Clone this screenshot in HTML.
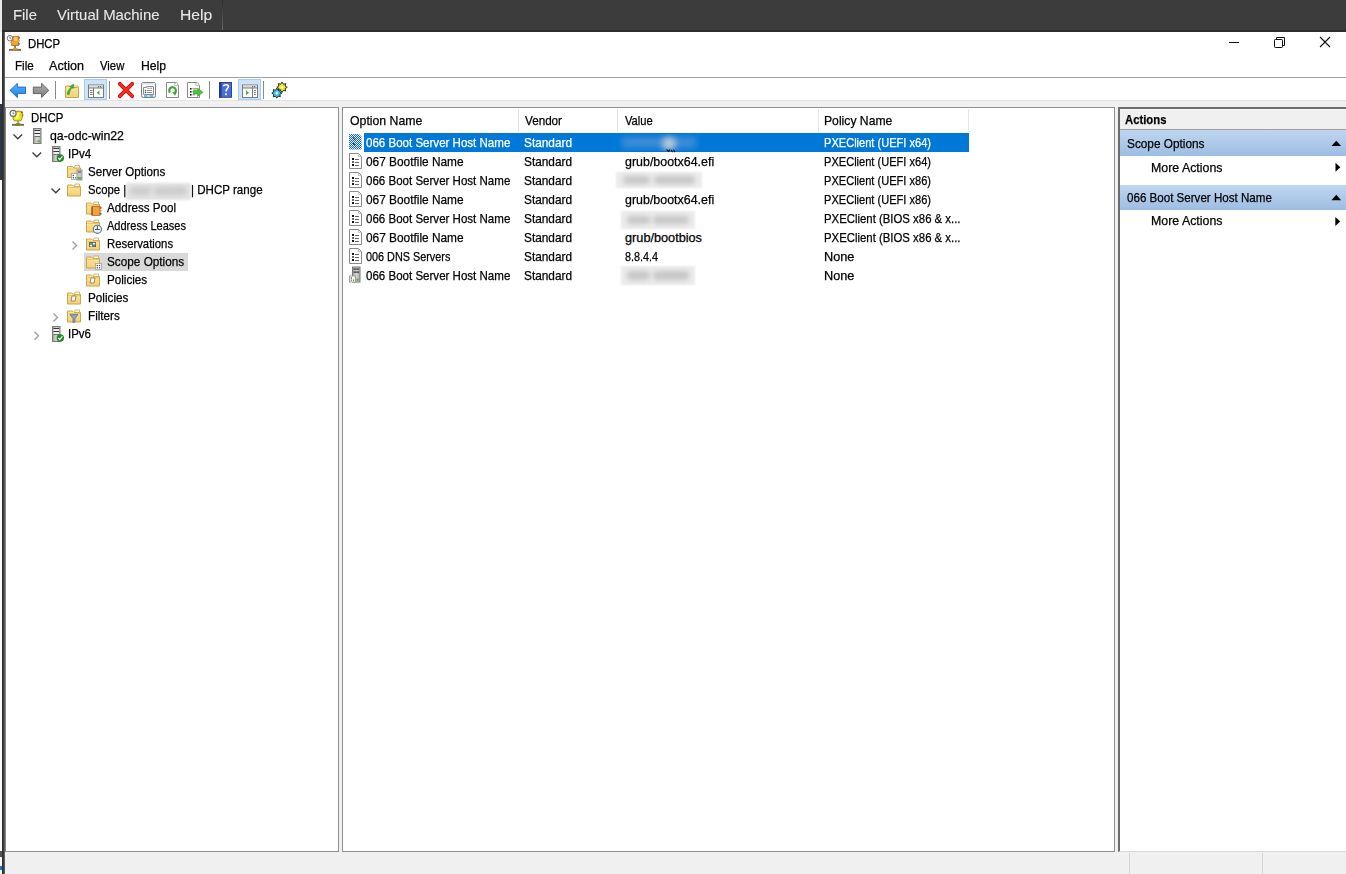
<!DOCTYPE html>
<html><head><meta charset="utf-8"><style>
*{margin:0;padding:0;box-sizing:border-box}
html,body{width:1346px;height:874px;overflow:hidden;background:#fff;font-family:"Liberation Sans",sans-serif;color:#000}
.t{position:absolute;white-space:nowrap;transform-origin:0 0;-webkit-text-stroke:0.25px currentColor}
.b{position:absolute}
svg{position:absolute;left:0;top:0}
</style></head><body>
<div class="b" style="left:0px;top:0px;width:1346px;height:32px;background:#3c3c3c"></div>
<div class="b" style="left:0px;top:32px;width:2px;height:842px;background:#fafafa"></div>
<div class="b" style="left:0px;top:104px;width:2px;height:76px;background:#2e3844"></div>
<div class="b" style="left:0px;top:866px;width:2px;height:4px;background:#1a78d0"></div>
<div class="b" style="left:0px;top:851px;width:2px;height:6px;background:#555"></div>
<div class="b" style="left:0px;top:0px;width:2px;height:32px;background:#e9e9e9"></div>
<div class="b" style="left:2px;top:32px;width:3px;height:842px;background:linear-gradient(90deg,#2e2e2e 0,#2e2e2e 33%,#3e3e3e 33%,#3e3e3e 66%,#5e5e5e 66%)"></div>
<div class="b" style="left:2px;top:30px;width:1344px;height:2px;background:#2c2c2c"></div>
<div class="b" style="left:222px;top:0px;width:1px;height:30px;background:linear-gradient(#2a2a2a,#6a6a6a)"></div>
<div class="b" style="left:5px;top:77px;width:1341px;height:1px;background:#a0a0a0"></div>
<div class="b" style="left:5px;top:100px;width:1341px;height:1px;background:#e3e3e3"></div>
<div class="b" style="left:5px;top:101px;width:1341px;height:773px;background:#f0f0f0"></div>
<div class="b" style="left:5px;top:107px;width:334px;height:745px;background:#fff;border:1px solid #909090;border-left-color:#858585"></div>
<div class="b" style="left:342px;top:107px;width:773px;height:745px;background:#fff;border:1px solid #909090"></div>
<div class="b" style="left:1118px;top:107px;width:228px;height:745px;background:#fff;border-left:2px solid #6d6d6d;border-top:2px solid #6d6d6d;border-bottom:1px solid #d8d8d8"></div>
<div class="b" style="left:1129px;top:853px;width:1px;height:21px;background:#d6d6d6"></div>
<div class="b" style="left:1262px;top:853px;width:1px;height:21px;background:#d6d6d6"></div>
<div class="b" style="left:84px;top:79px;width:23px;height:21px;background:#cce4f7;border:1px solid #a6cdef"></div>
<div class="b" style="left:238px;top:79px;width:23px;height:21px;background:#cce4f7;border:1px solid #a6cdef"></div>
<div class="b" style="left:55px;top:81px;width:1px;height:18px;background:#8a8a8a"></div>
<div class="b" style="left:109px;top:81px;width:1px;height:18px;background:#8a8a8a"></div>
<div class="b" style="left:209px;top:81px;width:1px;height:18px;background:#8a8a8a"></div>
<div class="b" style="left:263px;top:81px;width:1px;height:18px;background:#8a8a8a"></div>
<div class="b" style="left:518px;top:109px;width:1px;height:23px;background:#e5e5e5"></div>
<div class="b" style="left:617px;top:109px;width:1px;height:23px;background:#e5e5e5"></div>
<div class="b" style="left:818px;top:109px;width:1px;height:23px;background:#e5e5e5"></div>
<div class="b" style="left:968px;top:109px;width:1px;height:23px;background:#e5e5e5"></div>
<div class="b" style="left:364px;top:133px;width:605px;height:19px;background:#0078d7"></div>
<div class="b" style="left:84px;top:253px;width:104px;height:18px;background:#d9d9d9"></div>
<div class="b" style="left:1120px;top:109px;width:226px;height:20px;background:#f0f0f0;border-top:1px solid #fafafa"></div>
<div class="b" style="left:1120px;top:129px;width:226px;height:1px;background:#a0a0a0"></div>
<div class="b" style="left:1120px;top:130px;width:226px;height:26px;background:linear-gradient(#bfd6f0,#9dbde3)"></div>
<div class="b" style="left:1120px;top:185px;width:226px;height:25px;background:linear-gradient(#bfd6f0,#9dbde3)"></div>
<div class="b" style="left:125px;top:182px;width:67px;height:18px;"><div class="b" style="left:1px;top:0.5px;width:65px;height:17px;background:#e4e4e4;filter:blur(0.8px)"></div><div class="b" style="left:5px;top:5.4px;width:21px;height:8.1px;background:#cbcbcb;filter:blur(2.5px);border-radius:4px"></div><div class="b" style="left:29px;top:5.4px;width:33px;height:8.1px;background:#cbcbcb;filter:blur(2.5px);border-radius:4px"></div></div>
<div class="b" style="left:615px;top:171px;width:88px;height:17px;"><div class="b" style="left:1px;top:0.5px;width:86px;height:16px;background:#ececec;filter:blur(0.8px)"></div><div class="b" style="left:8px;top:5.1px;width:27px;height:7.7px;background:#c6c6c6;filter:blur(2.5px);border-radius:4px"></div><div class="b" style="left:39px;top:5.1px;width:41px;height:7.7px;background:#c6c6c6;filter:blur(2.5px);border-radius:4px"></div></div>
<div class="b" style="left:620px;top:210px;width:76px;height:19px;"><div class="b" style="left:1px;top:0.5px;width:74px;height:18px;background:#ececec;filter:blur(0.8px)"></div><div class="b" style="left:7px;top:5.7px;width:23px;height:8.6px;background:#c6c6c6;filter:blur(2.5px);border-radius:4px"></div><div class="b" style="left:33px;top:5.7px;width:36px;height:8.6px;background:#c6c6c6;filter:blur(2.5px);border-radius:4px"></div></div>
<div class="b" style="left:620px;top:265px;width:76px;height:20px;"><div class="b" style="left:1px;top:0.5px;width:74px;height:19px;background:#ececec;filter:blur(0.8px)"></div><div class="b" style="left:7px;top:6.0px;width:23px;height:9.0px;background:#c6c6c6;filter:blur(2.5px);border-radius:4px"></div><div class="b" style="left:33px;top:6.0px;width:36px;height:9.0px;background:#c6c6c6;filter:blur(2.5px);border-radius:4px"></div></div>
<div class="b" style="left:618px;top:134px;width:82px;height:17px;overflow:hidden"><div class="b" style="left:4px;top:3px;width:74px;height:11px;background:#3e8cd6;filter:blur(3px)"></div><div class="b" style="left:44px;top:3px;width:14px;height:13px;background:#b8c8d8;filter:blur(3px);border-radius:6px"></div></div>
<svg width="1346" height="874" viewBox="0 0 1346 874"><defs>
<pattern id="chk" width="2" height="2" patternUnits="userSpaceOnUse"><rect width="2" height="2" fill="#e8f0fa"/><rect width="1" height="1" fill="#1064c8"/><rect x="1" y="1" width="1" height="1" fill="#1064c8"/></pattern>
<linearGradient id="tow" x1="0" y1="0" x2="1" y2="0"><stop offset="0" stop-color="#9a9a9a"/><stop offset="0.5" stop-color="#d8d8d8"/><stop offset="1" stop-color="#a8a8a8"/></linearGradient>
<linearGradient id="fold" x1="0" y1="0" x2="0" y2="1"><stop offset="0" stop-color="#fbe7a6"/><stop offset="1" stop-color="#f3cf72"/></linearGradient>
<linearGradient id="blu" x1="0" y1="0" x2="0" y2="1"><stop offset="0" stop-color="#5ab8ff"/><stop offset="1" stop-color="#1a7ee0"/></linearGradient>
<linearGradient id="gry" x1="0" y1="0" x2="0" y2="1"><stop offset="0" stop-color="#b0b0b0"/><stop offset="1" stop-color="#7a7a7a"/></linearGradient>
</defs>
<path d="M12.8 36.3 H18.5 V45.5 H11.6 V43.5 L10.8 42.6 L11.8 41.3 L12.8 40 Z" fill="#f4a62e" stroke="#9a7010" stroke-width="0.8"/>
<path d="M14.2 37.2 H17.2 V41 L14.2 41 Z" fill="#ffd060" opacity="0.9"/>
<circle cx="9.9" cy="38.2" r="2.7" fill="#fff" stroke="#6a6a7a" stroke-width="0.9"/><path d="M9.9 36.6 V38.3 H11.4" stroke="#5a5a8a" stroke-width="0.7" fill="none"/>
<circle cx="18.9" cy="37.8" r="1.1" fill="#e04a3a"/><circle cx="19" cy="40.8" r="1.1" fill="#e8c020"/><circle cx="18.8" cy="44" r="1.1" fill="#1a88c0"/>
<rect x="14.3" y="45.8" width="1.6" height="2.4" fill="#8a6a30"/><rect x="9" y="48.9" width="12" height="1.9" fill="#6a6a6a"/><rect x="13" y="48.2" width="4.2" height="2.6" fill="#d88a18"/>
<path d="M15.5 111.3 H20.5 L22.6 113.3 L22.3 117.5 L20.8 120.8 H14.3 L13 118.5 L13.6 115.5 Z" fill="#e8e020" stroke="#8a8a00" stroke-width="0.9"/>
<path d="M17 112.5 L19.5 112.5 L18.5 119 L15 119 Z" fill="#ffff70" opacity="0.9"/>
<circle cx="21.9" cy="112.3" r="1" fill="#d02a2a"/><circle cx="22.6" cy="115.3" r="0.9" fill="#7a8a00"/>
<circle cx="13.1" cy="113.4" r="3" fill="#fff" stroke="#6a6a6a" stroke-width="1.1"/><path d="M13.1 111.8 V113.6 H14.6" stroke="#6a6a6a" stroke-width="0.8" fill="none"/>
<rect x="17.2" y="121" width="1.6" height="2.5" fill="#8a8a8a"/><rect x="12" y="123.9" width="12" height="1.9" fill="#6e6e6e"/><rect x="15.8" y="123.2" width="4.5" height="2.6" fill="#7a8a00"/>
<g transform="translate(33,128)"><rect x="0.5" y="0.5" width="7.5" height="15" fill="url(#tow)" stroke="#7a7a7a" stroke-width="1"/>
<rect x="1.5" y="2" width="5.5" height="1.2" fill="#333"/><rect x="1.5" y="3.2" width="5.5" height="1.5" fill="#fff"/>
<rect x="1.5" y="5" width="5.5" height="1.2" fill="#333"/><rect x="1.5" y="6.2" width="5.5" height="1.5" fill="#fff"/>
<rect x="1.5" y="8" width="5.5" height="0.8" fill="#555"/><circle cx="5.8" cy="13.3" r="1.3" fill="#50c020"/></g>
<g transform="translate(52,146)"><rect x="0.5" y="0.5" width="7.5" height="15" fill="url(#tow)" stroke="#7a7a7a" stroke-width="1"/>
<rect x="1.5" y="2" width="5.5" height="1.2" fill="#333"/><rect x="1.5" y="3.2" width="5.5" height="1.5" fill="#fff"/>
<rect x="1.5" y="5" width="5.5" height="1.2" fill="#333"/><rect x="1.5" y="6.2" width="5.5" height="1.5" fill="#fff"/>
<rect x="1.5" y="8" width="5.5" height="0.8" fill="#555"/></g>
<circle cx="60.3" cy="158" r="3.7" fill="#1f8a1f"/><path d="M58.3 158 L59.8 159.6 L62.4 156.3" stroke="#fff" stroke-width="1.3" fill="none"/>
<g transform="translate(52,326)"><rect x="0.5" y="0.5" width="7.5" height="15" fill="url(#tow)" stroke="#7a7a7a" stroke-width="1"/>
<rect x="1.5" y="2" width="5.5" height="1.2" fill="#333"/><rect x="1.5" y="3.2" width="5.5" height="1.5" fill="#fff"/>
<rect x="1.5" y="5" width="5.5" height="1.2" fill="#333"/><rect x="1.5" y="6.2" width="5.5" height="1.5" fill="#fff"/>
<rect x="1.5" y="8" width="5.5" height="0.8" fill="#555"/></g>
<circle cx="60.3" cy="338" r="3.7" fill="#1f8a1f"/><path d="M58.3 338 L59.8 339.6 L62.4 336.3" stroke="#fff" stroke-width="1.3" fill="none"/>
<path d="M13.5 134.5 L17.8 138.8 L22.1 134.5" stroke="#404040" stroke-width="1.4" fill="none"/>
<path d="M32.5 152.5 L36.8 156.8 L41.1 152.5" stroke="#404040" stroke-width="1.4" fill="none"/>
<path d="M51.5 188.5 L55.8 192.8 L60.1 188.5" stroke="#404040" stroke-width="1.4" fill="none"/>
<path d="M72.5 241.5 L76.5 245.5 L72.5 249.5" stroke="#a0a0a0" stroke-width="1.4" fill="none"/>
<path d="M53.5 313.5 L57.5 317.5 L53.5 321.5" stroke="#a0a0a0" stroke-width="1.4" fill="none"/>
<path d="M34.5 331.7 L38.5 335.7 L34.5 339.7" stroke="#a0a0a0" stroke-width="1.4" fill="none"/>
<g transform="translate(67,165)"><path d="M0.5 1.5 H5.5 L7 3 H13.5 V12.5 H0.5 Z" fill="url(#fold)" stroke="#c9a551" stroke-width="1"/>
<path d="M8 0.5 H12.5 V3 H7.5 Z" fill="#fff" stroke="#c9a551" stroke-width="0.8"/>
<path d="M1 4 H13" stroke="#f0c860" stroke-width="1"/></g>
<rect x="71.5" y="173.5" width="6" height="6" fill="#fff" stroke="#a0a0a0" stroke-width="0.8"/><circle cx="73.3" cy="175.5" r="0.7" fill="#444"/><circle cx="73.3" cy="177.7" r="0.7" fill="#444"/><circle cx="75.6" cy="177.7" r="0.7" fill="#444"/>
<rect x="77" y="170" width="5" height="10" fill="#c8c8c8" stroke="#8a8a8a" stroke-width="0.8"/><rect x="77.5" y="177" width="4" height="2.5" fill="#6ab04a"/><rect x="78" y="171.5" width="3" height="1" fill="#444"/>
<g transform="translate(67,183.5)"><path d="M0.5 1.5 H5.5 L7 3 H13.5 V12.5 H0.5 Z" fill="url(#fold)" stroke="#c9a551" stroke-width="1"/>
<path d="M8 0.5 H12.5 V3 H7.5 Z" fill="#fff" stroke="#c9a551" stroke-width="0.8"/>
<path d="M1 4 H13" stroke="#f0c860" stroke-width="1"/></g>
<g transform="translate(86,201.5)"><path d="M0.5 1.5 H5.5 L7 3 H13.5 V12.5 H0.5 Z" fill="url(#fold)" stroke="#c9a551" stroke-width="1"/>
<path d="M8 0.5 H12.5 V3 H7.5 Z" fill="#fff" stroke="#c9a551" stroke-width="0.8"/>
<path d="M1 4 H13" stroke="#f0c860" stroke-width="1"/></g>
<rect x="92" y="206.5" width="8" height="9" fill="#f5a040" stroke="#b06a18" stroke-width="0.8"/><path d="M91 208 H93 M91 210 H93 M91 212 H93 M91 214 H93" stroke="#6a4010" stroke-width="0.9"/><circle cx="100.6" cy="207.8" r="1.1" fill="#d84a2a"/><circle cx="100.6" cy="210.8" r="1.1" fill="#e8a020"/><circle cx="100.6" cy="213.8" r="1.1" fill="#1a80b0"/>
<g transform="translate(86,219.5)"><path d="M0.5 1.5 H5.5 L7 3 H13.5 V12.5 H0.5 Z" fill="url(#fold)" stroke="#c9a551" stroke-width="1"/>
<path d="M8 0.5 H12.5 V3 H7.5 Z" fill="#fff" stroke="#c9a551" stroke-width="0.8"/>
<path d="M1 4 H13" stroke="#f0c860" stroke-width="1"/></g>
<circle cx="97.4" cy="229.3" r="4.1" fill="#e6f2fc" stroke="#6a747e" stroke-width="1.1"/><path d="M97.4 226 V229.5 M95 229.5 H99.8" stroke="#3a4048" stroke-width="0.9" fill="none"/>
<g transform="translate(86,237.5)"><path d="M0.5 1.5 H5.5 L7 3 H13.5 V12.5 H0.5 Z" fill="url(#fold)" stroke="#c9a551" stroke-width="1"/>
<path d="M8 0.5 H12.5 V3 H7.5 Z" fill="#fff" stroke="#c9a551" stroke-width="0.8"/>
<path d="M1 4 H13" stroke="#f0c860" stroke-width="1"/></g>
<g transform="translate(0,1)"><rect x="89" y="241" width="7" height="5" fill="#555"/><rect x="89.8" y="241.8" width="2.4" height="1.7" fill="#50c050"/><rect x="92.8" y="241.8" width="2.4" height="1.7" fill="#fff"/><rect x="89.8" y="243.8" width="2.4" height="1.7" fill="#fff"/><rect x="92.8" y="243.8" width="2.4" height="1.7" fill="#5090e0"/></g>
<g transform="translate(86,255.5)"><path d="M0.5 1.5 H5.5 L7 3 H13.5 V12.5 H0.5 Z" fill="url(#fold)" stroke="#c9a551" stroke-width="1"/>
<path d="M8 0.5 H12.5 V3 H7.5 Z" fill="#fff" stroke="#c9a551" stroke-width="0.8"/>
<path d="M1 4 H13" stroke="#f0c860" stroke-width="1"/></g>
<g transform="translate(0,1)"><rect x="95.5" y="262.5" width="6" height="6" fill="#fff" stroke="#a0a0a0" stroke-width="0.8"/><circle cx="97.3" cy="264.5" r="0.7" fill="#444"/><circle cx="97.3" cy="266.7" r="0.7" fill="#444"/><circle cx="99.6" cy="264.5" r="0.7" fill="#444"/><circle cx="99.6" cy="266.7" r="0.7" fill="#444"/></g>
<g transform="translate(86,273.5)"><path d="M0.5 1.5 H5.5 L7 3 H13.5 V12.5 H0.5 Z" fill="url(#fold)" stroke="#c9a551" stroke-width="1"/>
<path d="M8 0.5 H12.5 V3 H7.5 Z" fill="#fff" stroke="#c9a551" stroke-width="0.8"/>
<path d="M1 4 H13" stroke="#f0c860" stroke-width="1"/></g>
<g transform="translate(0,1)"><path d="M90 282 L91 277 L95 277 L94 282 Z" fill="#fff" stroke="#8a7040" stroke-width="0.8"/></g>
<g transform="translate(67,291.5)"><path d="M0.5 1.5 H5.5 L7 3 H13.5 V12.5 H0.5 Z" fill="url(#fold)" stroke="#c9a551" stroke-width="1"/>
<path d="M8 0.5 H12.5 V3 H7.5 Z" fill="#fff" stroke="#c9a551" stroke-width="0.8"/>
<path d="M1 4 H13" stroke="#f0c860" stroke-width="1"/></g>
<g transform="translate(0,1)"><path d="M71 300 L72 295 L76 295 L75 300 Z" fill="#fff" stroke="#8a7040" stroke-width="0.8"/></g>
<g transform="translate(67,309.5)"><path d="M0.5 1.5 H5.5 L7 3 H13.5 V12.5 H0.5 Z" fill="url(#fold)" stroke="#c9a551" stroke-width="1"/>
<path d="M8 0.5 H12.5 V3 H7.5 Z" fill="#fff" stroke="#c9a551" stroke-width="0.8"/>
<path d="M1 4 H13" stroke="#f0c860" stroke-width="1"/></g>
<g transform="translate(0,1)"><path d="M70 313.5 H78 L75 317.5 V321 L73 321.5 V317.5 Z" fill="#8aa6c6" stroke="#5a6a7a" stroke-width="0.7"/></g>
<g transform="translate(349,134)"><path d="M0 0 H10 L12.5 2.5 V15.5 H0 Z" fill="url(#chk)"/>
<path d="M4 3.5 L6 6 M4 9 L6 11.5" stroke="#0a3a80" stroke-width="1.2"/></g>
<g transform="translate(349,153)"><path d="M0.5 0.5 H9.5 L12.5 3.5 V15.5 H0.5 Z" fill="#fff" stroke="#8a8a8a" stroke-width="1"/>
<path d="M9.5 0.5 V3.5 H12.5" fill="none" stroke="#b8b8b8" stroke-width="0.8"/>
<rect x="3" y="5" width="2" height="2" fill="#111"/><rect x="3" y="8" width="2" height="2" fill="#666"/><rect x="3" y="11" width="2" height="2" fill="#111"/>
<path d="M6 6.5 H10 M6 9.5 H10 M6 12.5 H10" stroke="#666" stroke-width="1"/></g>
<g transform="translate(349,172)"><path d="M0.5 0.5 H9.5 L12.5 3.5 V15.5 H0.5 Z" fill="#fff" stroke="#8a8a8a" stroke-width="1"/>
<path d="M9.5 0.5 V3.5 H12.5" fill="none" stroke="#b8b8b8" stroke-width="0.8"/>
<rect x="3" y="5" width="2" height="2" fill="#111"/><rect x="3" y="8" width="2" height="2" fill="#666"/><rect x="3" y="11" width="2" height="2" fill="#111"/>
<path d="M6 6.5 H10 M6 9.5 H10 M6 12.5 H10" stroke="#666" stroke-width="1"/></g>
<g transform="translate(349,191)"><path d="M0.5 0.5 H9.5 L12.5 3.5 V15.5 H0.5 Z" fill="#fff" stroke="#8a8a8a" stroke-width="1"/>
<path d="M9.5 0.5 V3.5 H12.5" fill="none" stroke="#b8b8b8" stroke-width="0.8"/>
<rect x="3" y="5" width="2" height="2" fill="#111"/><rect x="3" y="8" width="2" height="2" fill="#666"/><rect x="3" y="11" width="2" height="2" fill="#111"/>
<path d="M6 6.5 H10 M6 9.5 H10 M6 12.5 H10" stroke="#666" stroke-width="1"/></g>
<g transform="translate(349,210)"><path d="M0.5 0.5 H9.5 L12.5 3.5 V15.5 H0.5 Z" fill="#fff" stroke="#8a8a8a" stroke-width="1"/>
<path d="M9.5 0.5 V3.5 H12.5" fill="none" stroke="#b8b8b8" stroke-width="0.8"/>
<rect x="3" y="5" width="2" height="2" fill="#111"/><rect x="3" y="8" width="2" height="2" fill="#666"/><rect x="3" y="11" width="2" height="2" fill="#111"/>
<path d="M6 6.5 H10 M6 9.5 H10 M6 12.5 H10" stroke="#666" stroke-width="1"/></g>
<g transform="translate(349,229)"><path d="M0.5 0.5 H9.5 L12.5 3.5 V15.5 H0.5 Z" fill="#fff" stroke="#8a8a8a" stroke-width="1"/>
<path d="M9.5 0.5 V3.5 H12.5" fill="none" stroke="#b8b8b8" stroke-width="0.8"/>
<rect x="3" y="5" width="2" height="2" fill="#111"/><rect x="3" y="8" width="2" height="2" fill="#666"/><rect x="3" y="11" width="2" height="2" fill="#111"/>
<path d="M6 6.5 H10 M6 9.5 H10 M6 12.5 H10" stroke="#666" stroke-width="1"/></g>
<g transform="translate(349,248)"><path d="M0.5 0.5 H9.5 L12.5 3.5 V15.5 H0.5 Z" fill="#fff" stroke="#8a8a8a" stroke-width="1"/>
<path d="M9.5 0.5 V3.5 H12.5" fill="none" stroke="#b8b8b8" stroke-width="0.8"/>
<rect x="3" y="5" width="2" height="2" fill="#111"/><rect x="3" y="8" width="2" height="2" fill="#666"/><rect x="3" y="11" width="2" height="2" fill="#111"/>
<path d="M6 6.5 H10 M6 9.5 H10 M6 12.5 H10" stroke="#666" stroke-width="1"/></g>
<g transform="translate(349,266.5)"><rect x="3.5" y="0.5" width="7.5" height="15" fill="url(#tow)" stroke="#7a7a7a" stroke-width="1"/>
<rect x="4.5" y="2" width="5.5" height="1.2" fill="#333"/><rect x="4.5" y="5" width="5.5" height="1.2" fill="#333"/>
<rect x="0.5" y="9.5" width="6" height="6" fill="#fff" stroke="#8a8a8a" stroke-width="0.8"/><circle cx="2.3" cy="11.5" r="0.7" fill="#333"/><circle cx="2.3" cy="13.6" r="0.7" fill="#333"/><circle cx="4.5" cy="13.6" r="0.7" fill="#333"/><circle cx="8.5" cy="13.3" r="1.2" fill="#60b040"/></g>
<path d="M10 90.4 L17.4 83.3 V87.1 H25.5 V93.6 H17.4 V97.5 Z" fill="url(#blu)" stroke="#1a68c0" stroke-width="0.9"/>
<path d="M48.8 90.4 L41.6 83.3 V87.1 H33.3 V93.6 H41.6 V97.5 Z" fill="url(#gry)" stroke="#5a5a5a" stroke-width="0.9"/>
<g transform="translate(65,83)"><path d="M0.5 3 H5 L6.5 4.5 H13.5 V14.5 H0.5 Z" fill="url(#fold)" stroke="#c9a551" stroke-width="1"/>
<path d="M8.5 3 H13 L13.5 4.5" fill="#fff" stroke="#c9a551" stroke-width="0.8"/>
<path d="M2.2 11.2 C2.6 8.2 4.2 6.2 5.8 4.6 L4.6 3.4 L8.8 1.2 L8.2 5.6 L7.1 4.6 C5.8 6 4.6 8.2 4.2 11.4 Z" fill="#42bc3a" stroke="#1e8a1e" stroke-width="0.6"/></g>
<g transform="translate(88,84.5)"><rect x="0.5" y="0.5" width="15" height="12.5" fill="#fff" stroke="#7a7a7a" stroke-width="1"/>
<rect x="1" y="1" width="14" height="2.5" fill="#dcdcdc"/><path d="M1 3.5 H15" stroke="#7a7a7a"/>
<rect x="12" y="1.6" width="1.2" height="1.2" fill="#666"/><rect x="10" y="1.6" width="1.2" height="1.2" fill="#666"/><path d="M5.5 3.5 V13" stroke="#7a7a7a"/><path d="M2 6 H4.5 M2 8 H4.5 M2 10 H4.5" stroke="#7a7a7a" stroke-width="1"/><path d="M11.5 6 L8.5 8.3 L11.5 10.6 Z" fill="#50b030"/></g>
<g transform="translate(242,84.5)"><rect x="0.5" y="0.5" width="15" height="12.5" fill="#fff" stroke="#7a7a7a" stroke-width="1"/>
<rect x="1" y="1" width="14" height="2.5" fill="#dcdcdc"/><path d="M1 3.5 H15" stroke="#7a7a7a"/>
<rect x="12" y="1.6" width="1.2" height="1.2" fill="#666"/><rect x="10" y="1.6" width="1.2" height="1.2" fill="#666"/><path d="M10.5 3.5 V13" stroke="#7a7a7a"/><path d="M12 6 H14 M12 8 H14 M12 10 H14" stroke="#7a7a7a" stroke-width="1"/><path d="M4 5.8 L7 8.3 L4 10.8 Z" fill="#50b030"/></g>
<path d="M119.8 83.8 L132.2 96.2 M132.2 83.8 L119.8 96.2" stroke="#b01010" stroke-width="3.8" stroke-linecap="round"/><path d="M119.8 83.8 L132.2 96.2 M132.2 83.8 L119.8 96.2" stroke="#ff2a1a" stroke-width="2.4" stroke-linecap="round"/>
<rect x="141.5" y="82.5" width="14" height="15" rx="1.8" fill="#fff" stroke="#7f7f7f" stroke-width="1"/>
<rect x="142" y="83" width="13" height="1.6" fill="#dfe3ea"/>
<path d="M143.5 94.5 V87.5 H146.5 V86.5 H153.5 V94.5 Z" fill="#fff" stroke="#8c8c8c" stroke-width="1"/>
<rect x="144.8" y="89.8" width="1.4" height="1.4" fill="#555"/><rect x="144.8" y="91.8" width="1.4" height="1.4" fill="#555"/>
<path d="M147 90.5 H152 M147 92.5 H152 M147.5 88.3 H149.5 M150.2 88.3 H152.2" stroke="#8c8c8c" stroke-width="1" fill="none"/>
<rect x="144" y="95" width="9.5" height="2" fill="#62c4f2"/><rect x="147" y="95.3" width="3" height="1.4" fill="#c8ecff"/>
<path d="M166.5 82.5 H175.5 L178.5 85.5 V97.5 H166.5 Z" fill="#fff" stroke="#8a8a8a" stroke-width="1"/>
<circle cx="176.2" cy="84.3" r="1.6" fill="#fff" stroke="#9a9a9a" stroke-width="0.8"/>
<path d="M170 92.6 A3.3 3.3 0 1 1 174.6 93.1" stroke="#3aa83a" stroke-width="2.2" fill="none"/><path d="M172.3 92.2 L176.8 91.6 L175.2 95.8 Z" fill="#3aa83a"/>
<path d="M187.5 82.5 H196.5 L199.5 85.5 V97.5 H187.5 Z" fill="#fff" stroke="#8a8a8a" stroke-width="1"/>
<circle cx="197.2" cy="84.3" r="1.6" fill="#fff" stroke="#9a9a9a" stroke-width="0.8"/>
<rect x="190" y="88" width="1.6" height="1.6" fill="#222"/><rect x="190" y="91" width="1.6" height="1.6" fill="#222"/><rect x="190" y="94" width="1.6" height="1.6" fill="#222"/>
<path d="M192.5 88.8 H197 M192.5 91.8 H195 M192.5 94.8 H195" stroke="#8a7a50" stroke-width="1" fill="none"/>
<path d="M193.5 90.3 H197.5 V88 L203 92.2 L197.5 96.4 V94.1 H193.5 Z" fill="#46c23c" stroke="#2c9a24" stroke-width="0.5"/>
<rect x="219" y="82" width="13" height="15.6" fill="#4a6fd3"/><rect x="219" y="82" width="2.6" height="15.6" fill="#1d3d9e"/><rect x="219.4" y="82.4" width="12.2" height="14.8" fill="none" stroke="#223a88" stroke-width="0.8"/>
<path d="M223.6 86.3 C223.8 84.2 228.4 84 228.4 86.6 C228.4 88.6 225.9 88.8 225.9 91.6" stroke="#fff" stroke-width="1.5" fill="none"/><rect x="225.1" y="93.3" width="1.7" height="1.8" fill="#fff"/>
<polygon points="287.20,87.30 285.14,88.60 285.68,90.98 283.30,90.44 282.00,92.50 280.70,90.44 278.32,90.98 278.86,88.60 276.80,87.30 278.86,86.00 278.32,83.62 280.70,84.16 282.00,82.10 283.30,84.16 285.68,83.62 285.14,86.00" fill="#f2e41c" stroke="#1a1a1a" stroke-width="0.9" stroke-linejoin="round"/><circle cx="282" cy="87.3" r="1.2" fill="#fff"/>
<polygon points="281.80,93.20 279.85,94.46 280.34,96.74 278.06,96.25 276.80,98.20 275.54,96.25 273.26,96.74 273.75,94.46 271.80,93.20 273.75,91.94 273.26,89.66 275.54,90.15 276.80,88.20 278.06,90.15 280.34,89.66 279.85,91.94" fill="#3cc6ea" stroke="#1a1a1a" stroke-width="0.9" stroke-linejoin="round"/><circle cx="276.8" cy="93.2" r="1.2" fill="#fff"/>
<path d="M1229 42.5 H1239" stroke="#111" stroke-width="1"/>
<rect x="1274.5" y="39.5" width="8" height="8" rx="0.8" fill="#fff" stroke="#111" stroke-width="1"/><path d="M1276.5 39.5 V37.5 H1284.5 V45.5 H1282.5" fill="none" stroke="#111" stroke-width="1"/>
<path d="M1320 37 L1330 47 M1330 37 L1320 47" stroke="#111" stroke-width="1.1"/>
<path d="M1331.5 146.1 L1336.3 140.7 L1341.1 146.1 Z" fill="#000"/>
<path d="M1331.5 200.2 L1336.3 194.8 L1341.1 200.2 Z" fill="#000"/>
<path d="M1335.5 162.8 L1340.3 167.3 L1335.5 171.8 Z" fill="#000"/>
<path d="M1335.3 216.9 L1340.2 221.4 L1335.3 225.9 Z" fill="#000"/>
<path d="M666.5 149.5 L668.5 151.5 L670 149.5 M671 149.8 L672.5 152.3 M673.5 149.8 L675 152.3" stroke="#111" stroke-width="1.1" fill="none"/></svg>
<div class="t" style="left:12.79px;top:6.70px;font-size:15px;line-height:15px;color:#e8e8e8;transform:scaleX(0.9877);-webkit-text-stroke:0.1px currentColor">File</div>
<div class="t" style="left:57.14px;top:6.70px;font-size:15px;line-height:15px;color:#e8e8e8;transform:scaleX(0.9942);-webkit-text-stroke:0.1px currentColor">Virtual Machine</div>
<div class="t" style="left:179.52px;top:6.70px;font-size:15px;line-height:15px;color:#e8e8e8;transform:scaleX(1.0416);-webkit-text-stroke:0.1px currentColor">Help</div>
<div class="t" style="left:27.77px;top:37.85px;font-size:12.7px;line-height:12.7px;color:#000;transform:scaleX(0.8927);">DHCP</div>
<div class="t" style="left:14.74px;top:59.65px;font-size:12.7px;line-height:12.7px;color:#000;transform:scaleX(0.9173);">File</div>
<div class="t" style="left:49.47px;top:59.65px;font-size:12.7px;line-height:12.7px;color:#000;transform:scaleX(0.9901);">Action</div>
<div class="t" style="left:100.35px;top:59.65px;font-size:12.7px;line-height:12.7px;color:#000;transform:scaleX(0.8908);">View</div>
<div class="t" style="left:140.80px;top:59.65px;font-size:12.7px;line-height:12.7px;color:#000;transform:scaleX(0.9613);">Help</div>
<div class="t" style="left:30.66px;top:111.75px;font-size:12.7px;line-height:12.7px;color:#000;transform:scaleX(0.9015);">DHCP</div>
<div class="t" style="left:49.88px;top:129.75px;font-size:12.7px;line-height:12.7px;color:#000;transform:scaleX(0.9711);">qa-odc-win22</div>
<div class="t" style="left:68.13px;top:147.75px;font-size:12.7px;line-height:12.7px;color:#000;transform:scaleX(0.9131);">IPv4</div>
<div class="t" style="left:87.88px;top:165.75px;font-size:12.7px;line-height:12.7px;color:#000;transform:scaleX(0.9119);">Server Options</div>
<div class="t" style="left:107.48px;top:201.75px;font-size:12.7px;line-height:12.7px;color:#000;transform:scaleX(0.9161);">Address Pool</div>
<div class="t" style="left:107.48px;top:219.75px;font-size:12.7px;line-height:12.7px;color:#000;transform:scaleX(0.8677);">Address Leases</div>
<div class="t" style="left:106.67px;top:237.75px;font-size:12.7px;line-height:12.7px;color:#000;transform:scaleX(0.8923);">Reservations</div>
<div class="t" style="left:106.97px;top:255.75px;font-size:12.7px;line-height:12.7px;color:#000;transform:scaleX(0.9273);">Scope Options</div>
<div class="t" style="left:106.64px;top:273.75px;font-size:12.7px;line-height:12.7px;color:#000;transform:scaleX(0.9180);">Policies</div>
<div class="t" style="left:87.54px;top:291.75px;font-size:12.7px;line-height:12.7px;color:#000;transform:scaleX(0.9251);">Policies</div>
<div class="t" style="left:87.54px;top:309.75px;font-size:12.7px;line-height:12.7px;color:#000;transform:scaleX(0.9223);">Filters</div>
<div class="t" style="left:68.44px;top:327.75px;font-size:12.7px;line-height:12.7px;color:#000;transform:scaleX(0.9035);">IPv6</div>
<div class="t" style="left:87.89px;top:183.75px;font-size:12.7px;line-height:12.7px;color:#000;transform:scaleX(0.8897);">Scope |</div>
<div class="t" style="left:190.97px;top:183.75px;font-size:12.7px;line-height:12.7px;color:#000;transform:scaleX(0.9116);">| DHCP range</div>
<div class="t" style="left:350.12px;top:114.65px;font-size:12.7px;line-height:12.7px;color:#000;transform:scaleX(0.9680);">Option Name</div>
<div class="t" style="left:524.95px;top:114.65px;font-size:12.7px;line-height:12.7px;color:#000;transform:scaleX(0.9202);">Vendor</div>
<div class="t" style="left:625.26px;top:114.65px;font-size:12.7px;line-height:12.7px;color:#000;transform:scaleX(0.8796);">Value</div>
<div class="t" style="left:824.20px;top:114.65px;font-size:12.7px;line-height:12.7px;color:#000;transform:scaleX(0.9600);">Policy Name</div>
<div class="t" style="left:365.85px;top:136.95px;font-size:12.7px;line-height:12.7px;color:#fff;transform:scaleX(0.9095);">066 Boot Server Host Name</div>
<div class="t" style="left:524.47px;top:136.95px;font-size:12.7px;line-height:12.7px;color:#fff;transform:scaleX(0.9332);">Standard</div>
<div class="t" style="left:824.29px;top:136.95px;font-size:12.7px;line-height:12.7px;color:#fff;transform:scaleX(0.8721);">PXEClient (UEFI x64)</div>
<div class="t" style="left:365.84px;top:155.95px;font-size:12.7px;line-height:12.7px;color:#000;transform:scaleX(0.9349);">067 Bootfile Name</div>
<div class="t" style="left:524.47px;top:155.95px;font-size:12.7px;line-height:12.7px;color:#000;transform:scaleX(0.9332);">Standard</div>
<div class="t" style="left:625.08px;top:155.95px;font-size:12.7px;line-height:12.7px;color:#000;transform:scaleX(0.9799);">grub/bootx64.efi</div>
<div class="t" style="left:824.29px;top:155.95px;font-size:12.7px;line-height:12.7px;color:#000;transform:scaleX(0.8721);">PXEClient (UEFI x64)</div>
<div class="t" style="left:365.85px;top:174.95px;font-size:12.7px;line-height:12.7px;color:#000;transform:scaleX(0.9095);">066 Boot Server Host Name</div>
<div class="t" style="left:524.47px;top:174.95px;font-size:12.7px;line-height:12.7px;color:#000;transform:scaleX(0.9332);">Standard</div>
<div class="t" style="left:824.29px;top:174.95px;font-size:12.7px;line-height:12.7px;color:#000;transform:scaleX(0.8721);">PXEClient (UEFI x86)</div>
<div class="t" style="left:365.84px;top:193.95px;font-size:12.7px;line-height:12.7px;color:#000;transform:scaleX(0.9349);">067 Bootfile Name</div>
<div class="t" style="left:524.47px;top:193.95px;font-size:12.7px;line-height:12.7px;color:#000;transform:scaleX(0.9332);">Standard</div>
<div class="t" style="left:625.08px;top:193.95px;font-size:12.7px;line-height:12.7px;color:#000;transform:scaleX(0.9799);">grub/bootx64.efi</div>
<div class="t" style="left:824.29px;top:193.95px;font-size:12.7px;line-height:12.7px;color:#000;transform:scaleX(0.8721);">PXEClient (UEFI x86)</div>
<div class="t" style="left:365.85px;top:212.95px;font-size:12.7px;line-height:12.7px;color:#000;transform:scaleX(0.9095);">066 Boot Server Host Name</div>
<div class="t" style="left:524.47px;top:212.95px;font-size:12.7px;line-height:12.7px;color:#000;transform:scaleX(0.9332);">Standard</div>
<div class="t" style="left:824.27px;top:212.95px;font-size:12.7px;line-height:12.7px;color:#000;transform:scaleX(0.8964);">PXEClient (BIOS x86 &amp; x...</div>
<div class="t" style="left:365.84px;top:231.95px;font-size:12.7px;line-height:12.7px;color:#000;transform:scaleX(0.9349);">067 Bootfile Name</div>
<div class="t" style="left:524.47px;top:231.95px;font-size:12.7px;line-height:12.7px;color:#000;transform:scaleX(0.9332);">Standard</div>
<div class="t" style="left:625.07px;top:231.95px;font-size:12.7px;line-height:12.7px;color:#000;">grub/bootbios</div>
<div class="t" style="left:824.27px;top:231.95px;font-size:12.7px;line-height:12.7px;color:#000;transform:scaleX(0.8964);">PXEClient (BIOS x86 &amp; x...</div>
<div class="t" style="left:365.88px;top:250.95px;font-size:12.7px;line-height:12.7px;color:#000;transform:scaleX(0.8542);">006 DNS Servers</div>
<div class="t" style="left:524.47px;top:250.95px;font-size:12.7px;line-height:12.7px;color:#000;transform:scaleX(0.9332);">Standard</div>
<div class="t" style="left:625.13px;top:250.95px;font-size:12.7px;line-height:12.7px;color:#000;transform:scaleX(0.8544);">8.8.4.4</div>
<div class="t" style="left:824.16px;top:250.95px;font-size:12.7px;line-height:12.7px;color:#000;transform:scaleX(1.0016);">None</div>
<div class="t" style="left:365.85px;top:269.95px;font-size:12.7px;line-height:12.7px;color:#000;transform:scaleX(0.9095);">066 Boot Server Host Name</div>
<div class="t" style="left:524.47px;top:269.95px;font-size:12.7px;line-height:12.7px;color:#000;transform:scaleX(0.9332);">Standard</div>
<div class="t" style="left:824.16px;top:269.95px;font-size:12.7px;line-height:12.7px;color:#000;transform:scaleX(1.0016);">None</div>
<div class="t" style="left:1125.12px;top:113.75px;font-size:12.7px;line-height:12.7px;color:#000;font-weight:bold;transform:scaleX(0.8900);">Actions</div>
<div class="t" style="left:1126.67px;top:137.75px;font-size:12.7px;line-height:12.7px;color:#000;transform:scaleX(0.9309);">Scope Options</div>
<div class="t" style="left:1150.58px;top:161.95px;font-size:12.7px;line-height:12.7px;color:#000;transform:scaleX(0.9749);">More Actions</div>
<div class="t" style="left:1126.55px;top:191.75px;font-size:12.7px;line-height:12.7px;color:#000;transform:scaleX(0.9127);">066 Boot Server Host Name</div>
<div class="t" style="left:1150.58px;top:215.45px;font-size:12.7px;line-height:12.7px;color:#000;transform:scaleX(0.9749);">More Actions</div>
</body></html>
